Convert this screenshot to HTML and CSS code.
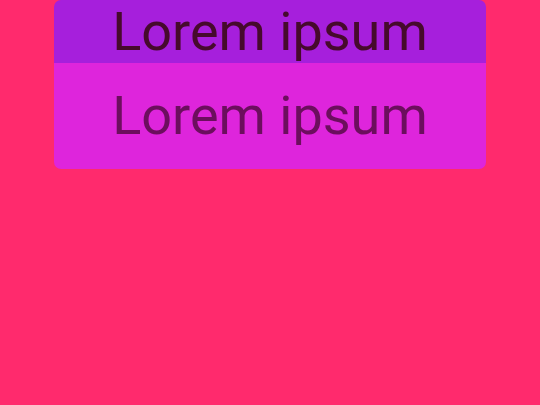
FILE: index.html
```html
<!DOCTYPE html>
<html>
<head>
<meta charset="utf-8">
<link rel="stylesheet" href="styles.css">
</head>
<body>
<div class="card">
  <div class="card-header">Lorem ipsum</div>
  <div class="card-body">Lorem ipsum</div>
</div>
</body>
</html>
```
FILE: styles.css
```css
html, body {
  margin: 0;
  padding: 0;
}
body {
  background: #ff2a6d;
  font-family: Roboto, "Liberation Sans", sans-serif;
  width: 540px;
  height: 405px;
}
.card {
  width: 432px;
  margin: 0 auto;
  border-radius: 7px;
  overflow: hidden;
  text-align: center;
  font-size: 54px;
  line-height: normal;
}
.card-header {
  background: #a61fdc;
  color: #460a2c;
  height: 63px;
}
.card-body {
  background: #de25dc;
  color: #6c0e5e;
  padding: 21px 0 22px;
}
```
